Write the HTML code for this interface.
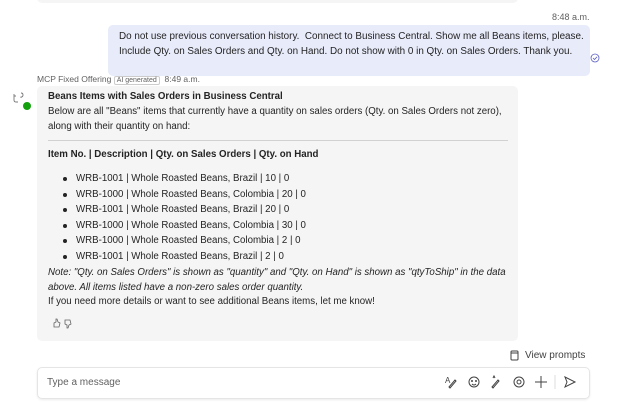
<!DOCTYPE html>
<html><head><style>
body{margin:0;width:624px;height:406px;background:#fff;font-family:"Liberation Sans",sans-serif;color:#242424;position:relative;overflow:hidden;font-size:9.7px}
.a{position:absolute}
.top{left:37px;top:-10px;width:481px;height:13px;background:#f5f5f5;border-radius:5px}
.user{left:108px;top:25px;width:482px;height:51px;background:#e8ebfa;border-radius:5px}
.user div{position:absolute;left:11px;font-size:9.9px;white-space:nowrap}
.bot{left:37px;top:86px;width:481px;height:255px;background:#f5f5f5;border-radius:5px}
.t{position:absolute;white-space:nowrap}
.li{left:39px}
.li:before{content:"";position:absolute;left:-13px;top:4px;width:4px;height:4px;border-radius:50%;background:#242424}
</style></head><body>
<div class="a top"></div>
<div class="a" style="left:552px;top:12px;font-size:9px;color:#616161">8:48 a.m.</div>
<div class="a user">
<div style="top:6px">Do not use previous conversation history.&nbsp; Connect to Business Central. Show me all Beans items, please.</div>
<div style="top:21px">Include Qty. on Sales Orders and Qty. on Hand. Do not show with 0 in Qty. on Sales Orders. Thank you.</div>
</div>
<svg class="a" style="left:590px;top:53px" width="10" height="10"><circle cx="5" cy="5" r="4" fill="none" stroke="#5b5fc7" stroke-width="0.8"/><path d="M3 5l1.5 1.5L7 3.8" fill="none" stroke="#5b5fc7" stroke-width="0.8"/></svg>
<div class="a" style="left:37px;top:74px;font-size:8.5px;color:#616161;white-space:nowrap">MCP Fixed Offering <span style="border:1px solid #ccc;border-radius:2px;font-size:7px;padding:0 2px">AI generated</span>&nbsp; 8:49 a.m.</div>
<div class="a" style="left:8px;top:88px;width:22px;height:22px;background:#fff;border-radius:3px"></div>
<svg class="a" style="left:11px;top:90px" width="16" height="16" fill="none" stroke="#777" stroke-width="0.9"><path d="M3 4v6q0 2 2 2h2M3 6h2M10 3q2 0 2 2t-2 2v1"/></svg>
<div class="a" style="left:22px;top:101px;width:8px;height:8px;border-radius:50%;background:#13a10e;border:1px solid #fff"></div>
<div class="a bot">
<div class="t" style="left:11px;top:5px;font-weight:bold">Beans Items with Sales Orders in Business Central</div>
<div class="t" style="left:11px;top:20px">Below are all "Beans" items that currently have a quantity on sales orders (Qty. on Sales Orders not zero),</div>
<div class="t" style="left:11px;top:35px">along with their quantity on hand:</div>
<div class="a" style="left:11px;top:54px;width:460px;height:1px;background:#d1d1d1"></div>
<div class="t" style="left:11px;top:63px;font-weight:bold">Item No. | Description | Qty. on Sales Orders | Qty. on Hand</div>
<div class="t li" style="top:87px">WRB-1001 | Whole Roasted Beans, Brazil | 10 | 0</div>
<div class="t li" style="top:102.5px">WRB-1000 | Whole Roasted Beans, Colombia | 20 | 0</div>
<div class="t li" style="top:118px">WRB-1001 | Whole Roasted Beans, Brazil | 20 | 0</div>
<div class="t li" style="top:133.5px">WRB-1000 | Whole Roasted Beans, Colombia | 30 | 0</div>
<div class="t li" style="top:149px">WRB-1000 | Whole Roasted Beans, Colombia | 2 | 0</div>
<div class="t li" style="top:164.5px">WRB-1001 | Whole Roasted Beans, Brazil | 2 | 0</div>
<div class="t" style="left:11px;top:181px;font-style:italic">Note: "Qty. on Sales Orders" is shown as "quantity" and "Qty. on Hand" is shown as "qtyToShip" in the data</div>
<div class="t" style="left:11px;top:196px;font-style:italic">above. All items listed have a non-zero sales order quantity.</div>
<div class="t" style="left:11px;top:210px">If you need more details or want to see additional Beans items, let me know!</div>
<svg class="a" style="left:15px;top:232px" width="24" height="11"><path d="M2 9h5l1-4-2-1-1-3-1 0 0 3-2 1z M13 2h5l1 4-2 1-1 3-1 0 0-3-2-1z" fill="none" stroke="#616161" stroke-width="0.8"/></svg>
</div>
<svg class="a" style="left:510px;top:350px" width="9" height="11"><rect x="1" y="1" width="7" height="9" rx="1" fill="none" stroke="#424242" stroke-width="1"/><line x1="1" y1="3" x2="8" y2="3" stroke="#424242"/></svg>
<div class="a" style="left:525px;top:350px;font-size:10px;color:#424242">View prompts</div>
<div class="a" style="left:37px;top:367px;width:551px;height:30px;border:1px solid #e5e5e5;border-radius:5px;box-shadow:0 1px 2px rgba(0,0,0,.08)"></div>
<div class="a" style="left:47px;top:377px;font-size:10px;color:#616161">Type a message</div>
<svg class="a" style="left:444px;top:374px" width="135" height="16" fill="none" stroke="#424242" stroke-width="1">
<text x="1" y="9" font-size="8" fill="#424242" stroke="none" font-family="Liberation Sans">A</text><path d="M5 13l6-7 1 1-6 7z"/>
<circle cx="30" cy="8" r="5"/><circle cx="28" cy="7" r=".5"/><circle cx="32" cy="7" r=".5"/><path d="M28 10q2 2 4 0"/>
<path d="M48 13l6-7 1 1-6 7z M49 4l1-2 1 2"/>
<circle cx="75" cy="8" r="5"/><circle cx="75" cy="8" r="2"/>
<path d="M97 2v12M91 8h12"/>
<path d="M111 1v14" stroke="#ddd"/>
<path d="M121 3l10 5-10 5 2-5z"/>
</svg>
</body></html>
